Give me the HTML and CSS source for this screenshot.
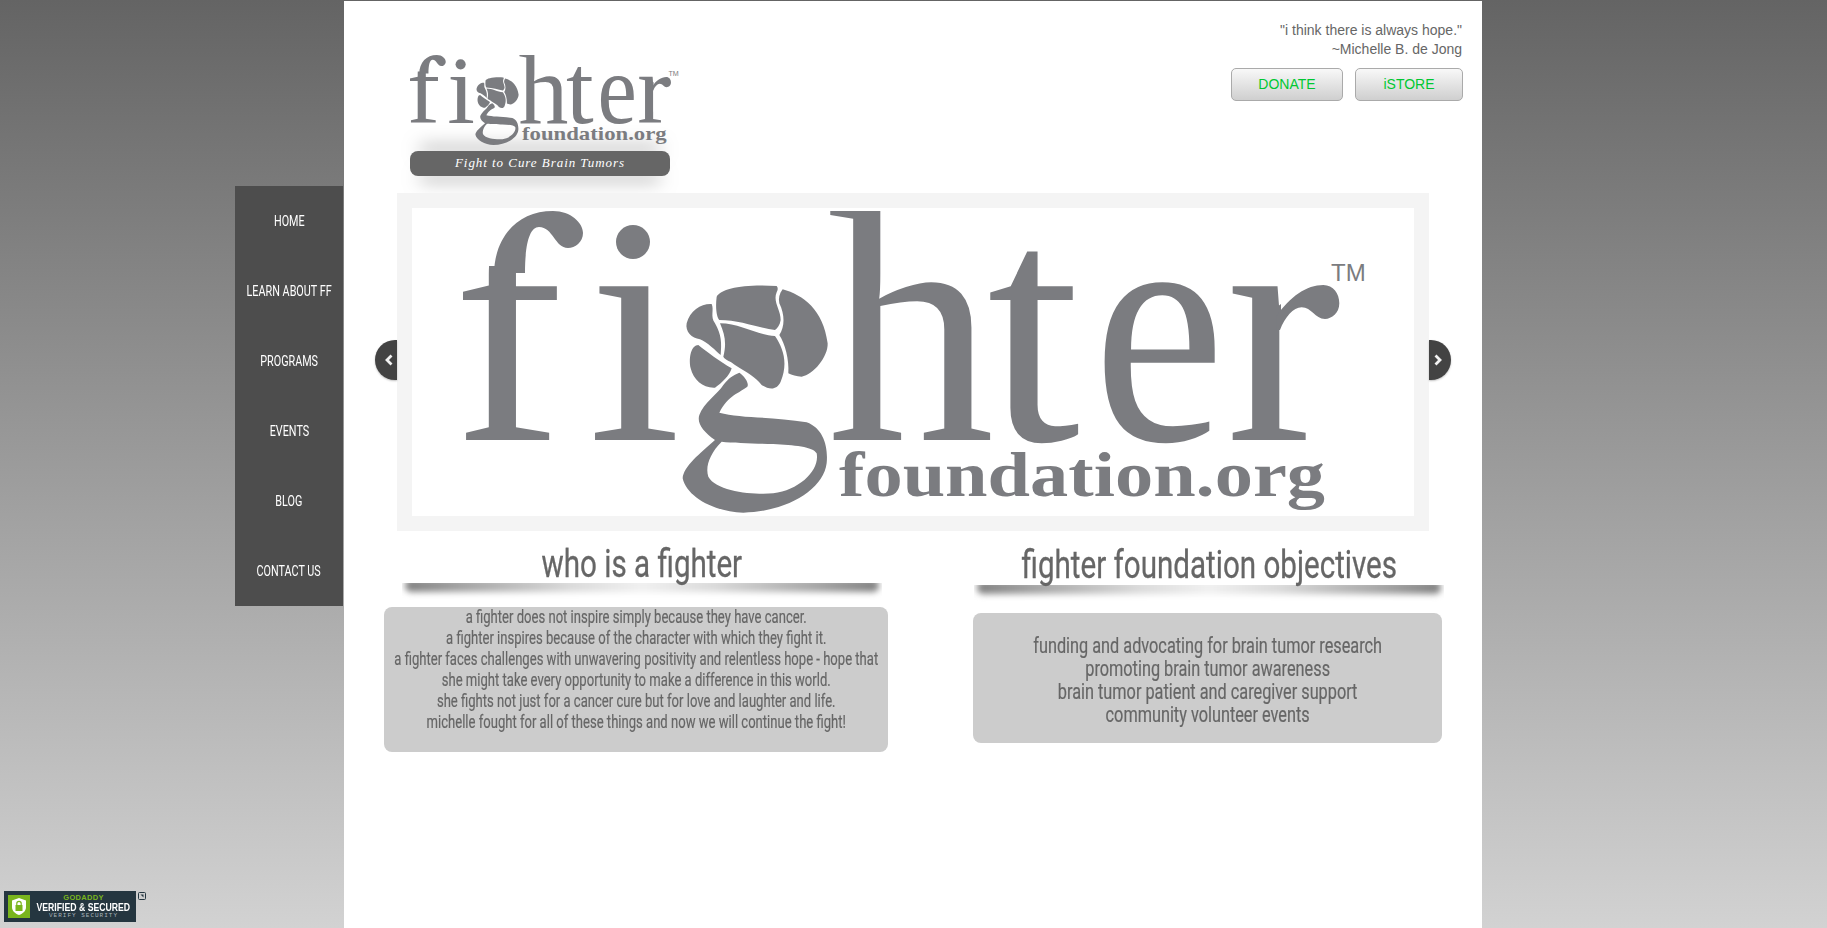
FILE: index.html
```html
<!DOCTYPE html>
<html lang="en">
<head>
<meta charset="utf-8">
<title>Fighter Foundation</title>
<link rel="stylesheet" href="styles.css">
</head>
<body>
<svg class="defs" width="0" height="0" aria-hidden="true">
  <defs>
    <clipPath id="clip-f"><rect x="-20" y="55" width="160" height="200"/></clipPath>
    <clipPath id="clip-r"><rect x="740" y="0" width="78" height="300"/><rect x="740" y="190" width="130" height="60"/></clipPath>
    <g id="fighter-logo">
      <text class="logo-word" x="-11" y="229" clip-path="url(#clip-f)">f</text>
      <path class="logo-fill" d="M31 62C32 25 55 0 90 0C108 0 120 12 120 22C120 31 112 37 105 37C92 37 90 16 76 16C66 16 62 35 62 62Z"/>
      <text class="logo-word" x="125" y="229">ı</text>
      <circle class="logo-fill" cx="170" cy="31" r="17"/>
      <text class="logo-word" x="364" y="229">h</text>
      <text class="logo-word" x="524" y="229">t</text>
      <text class="logo-word" x="630" y="229" textLength="132" lengthAdjust="spacingAndGlyphs">e</text>
      <text class="logo-word" x="763" y="229" clip-path="url(#clip-r)">r</text>
      <text class="logo-tm" x="868" y="70">TM</text>
      <text class="logo-org" x="376" y="285" textLength="486" lengthAdjust="spacingAndGlyphs">foundation.org</text>
      <path class="logo-fill" transform="translate(667 19) scale(.3333)" d="M440 258C480 200 530 165 580 165C610 165 628 190 628 220C628 250 605 267 585 267C555 267 545 232 515 232C490 232 465 262 450 300L440 300Z"/>
      <g transform="translate(197 49) scale(.3333)">
        <path class="logo-fill" d="M170 110C185 85 250 72 350 78C356 85 352 92 350 97C338 125 362 150 362 180C360 195 352 205 345 210C300 205 240 180 178 180C172 175 165 150 170 110Z"/>
        <path class="logo-fill" d="M368 88C430 105 490 150 503 250C505 290 460 345 425 350C410 350 395 345 385 340C388 300 375 250 358 225C375 200 375 165 358 130C355 115 358 100 368 88Z"/>
        <path class="logo-fill" d="M155 132C163 150 150 170 165 190C185 225 185 250 182 285C170 275 140 245 120 238C95 235 75 215 80 190C90 150 125 130 155 132Z"/>
        <path class="logo-fill" d="M180 190C240 190 290 225 345 228C370 265 385 310 362 365C350 390 330 390 305 375C285 350 265 340 225 315C215 305 195 300 190 290C200 250 195 225 180 190Z"/>
        <path class="logo-fill" d="M115 255C140 275 180 305 215 325C210 345 185 370 165 383C130 385 100 360 92 325C85 290 95 255 115 255Z"/>
        <path class="logo-fill" fill-rule="evenodd" d="M238 338C255 350 268 370 262 380C240 398 205 405 178 458C240 475 340 470 440 487C490 505 505 560 500 610C490 690 380 755 250 758C160 755 80 710 68 655C70 620 120 580 165 540C130 515 110 490 118 465C130 430 175 400 190 375C205 355 220 345 238 338ZM185 545C150 580 135 620 145 650C170 695 280 705 340 700C420 690 480 630 470 580C460 560 400 555 340 552C290 550 220 550 185 545Z"/>
      </g>
    </g>
  </defs>
</svg>

<div class="page">
  <nav class="side-nav">
    <a class="nav-item"><span class="squeeze">Home</span></a>
    <a class="nav-item"><span class="squeeze">Learn About FF</span></a>
    <a class="nav-item"><span class="squeeze">Programs</span></a>
    <a class="nav-item"><span class="squeeze">Events</span></a>
    <a class="nav-item"><span class="squeeze">Blog</span></a>
    <a class="nav-item"><span class="squeeze">Contact Us</span></a>
  </nav>

  <main class="column">
    <header class="top">
      <div class="brand">
        <svg class="logo-small" viewBox="0 0 910 305" role="img" aria-label="fighter foundation.org"><use href="#fighter-logo"/></svg>
        <div class="tagline">Fight to Cure Brain Tumors</div>
      </div>
      <div class="top-right">
        <p class="quote">"i think there is always hope."<br>~Michelle B. de Jong</p>
        <div class="buttons">
          <a class="btn btn-donate">DONATE</a>
          <a class="btn btn-store">iSTORE</a>
        </div>
      </div>
    </header>

    <section class="slider">
      <span class="arrow arrow-left"><svg viewBox="0 0 10 12" class="chev"><path d="M7.500 1.500 3 6l4.500 4.500"/></svg></span>
      <div class="slide">
        <svg class="logo-large" viewBox="0 0 910 305" role="img" aria-label="fighter foundation.org"><use href="#fighter-logo"/></svg>
      </div>
      <span class="arrow arrow-right"><svg viewBox="0 0 10 12" class="chev"><path d="M2.500 1.500 7 6l-4.500 4.500"/></svg></span>
    </section>

    <section class="info">
      <article class="info-col info-who">
        <h2 class="info-head"><span class="squeeze">who is a fighter</span></h2>
        <div class="shade"></div>
        <div class="panel panel-who">
          <div class="squeeze">
            a fighter does not inspire simply because they have cancer.<br>
            a fighter inspires because of the character with which they fight it.<br>
            a fighter faces challenges with unwavering positivity and relentless hope - hope that<br>
            she might take every opportunity to make a difference in this world.<br>
            she fights not just for a cancer cure but for love and laughter and life.<br>
            michelle fought for all of these things and now we will continue the fight!
          </div>
        </div>
      </article>
      <article class="info-col info-obj">
        <h2 class="info-head"><span class="squeeze">fighter foundation objectives</span></h2>
        <div class="shade"></div>
        <div class="panel panel-obj">
          <div class="squeeze">
            funding and advocating for brain tumor research<br>
            promoting brain tumor awareness<br>
            brain tumor patient and caregiver support<br>
            community volunteer events
          </div>
        </div>
      </article>
    </section>
  </main>
</div>

<div class="seal">
  <div class="seal-badge">
    <span class="seal-icon">
      <svg viewBox="0 0 22 23" width="22" height="23"><path d="M11 3 18 5.500V12c0 4-3 6.500-7 8-4-1.500-7-4-7-8V5.500Z" fill="#fff"/><rect x="7.500" y="10" width="7" height="6" fill="#7ab51d"/><path d="M8.800 10V8.500a2.200 2.200 0 0 1 4.400 0V10" fill="none" stroke="#7ab51d" stroke-width="1.200"/></svg>
    </span>
    <span class="seal-text">
      <span class="seal-brand">GODADDY</span>
      <span class="seal-main">VERIFIED &amp; SECURED</span>
      <span class="seal-sub">VERIFY SECURITY</span>
    </span>
  </div>
  <svg class="seal-mark" viewBox="0 0 8 8" width="8" height="8"><rect x=".5" y=".5" width="7" height="7" rx="1" fill="none" stroke="#253640"/><path d="M2.500 2.500h3v3z" fill="#253640"/></svg>
</div>
</body>
</html>
```

FILE: styles.css
```css
* { box-sizing: border-box; }
html, body { margin: 0; padding: 0; height: 100%; overflow: hidden; }
body {
  background: linear-gradient(#646464, #d2d2d2);
  font-family: "Liberation Sans", Arial, sans-serif;
  color: #666;
}
.defs { position: absolute; }

.squeeze { display: inline-block; white-space: nowrap; flex: none; font-family: Roboto, "Liberation Sans", sans-serif; }

.page { display: flex; align-items: flex-start; padding-left: 235px; height: 928px; }

.side-nav { width: 108px; margin-top: 186px; margin-right: 1px; background: #4d4d4d; display: flex; flex-direction: column; }
.nav-item {
  height: 70px; display: flex; align-items: center; justify-content: center;
  color: #fff; text-transform: uppercase; font-size: 15px;
}
.nav-item .squeeze { transform: scaleX(.72); }

.column { width: 1138px; height: 927px; margin-top: 1px; background: #fff; display: flex; flex-direction: column; }

.top { height: 192px; display: flex; justify-content: space-between; padding: 0 19px 0 66px; }
.brand { padding-top: 54px; width: 271px; }
.logo-small { display: block; width: 271px; height: 91px; position: relative; z-index: 1; }
.tagline {
  width: 260px; height: 25px; margin-top: 5px; padding-bottom: 2px; border-radius: 8px; background: #666; color: #fff;
  display: flex; align-items: center; justify-content: center;
  font-family: "Liberation Serif", serif; font-style: italic; font-size: 13px; letter-spacing: .95px;
  box-shadow: 0 14px 18px -10px rgba(0,0,0,.5), 0 -14px 18px -10px rgba(0,0,0,.5);
}
.top-right { padding-top: 20px; display: flex; flex-direction: column; align-items: flex-end; }
.quote { margin: 0; font-size: 14px; line-height: 19px; text-align: right; padding-right: 1px; }
.buttons { display: flex; gap: 12px; margin-top: 9px; }
.btn {
  height: 33px; padding-bottom: 2px; display: flex; align-items: center; justify-content: center;
  border: 1px solid #aaa; border-radius: 5px;
  background: linear-gradient(#f8f8f8, #cfcfcf);
  color: #00c832; font-size: 14px;
}
.btn-donate { width: 112px; }
.btn-store { width: 108px; }

.slider { position: relative; width: 1032px; height: 338px; margin-left: 53px; padding: 15px; background: #f4f4f4; }
.slide { height: 308px; background: #fff; padding: 3px 0 0 51px; }
.logo-large { display: block; width: 910px; height: 305px; }
.logo-word { font-family: "Liberation Serif", serif; font-size: 335px; fill: #7b7c80; }
.logo-fill { fill: #7b7c80; }
.logo-tm { font-family: "Liberation Sans", sans-serif; font-size: 24px; fill: #7b7c80; }
.logo-org { font-family: "Liberation Serif", serif; font-weight: 700; font-size: 64px; fill: #7b7c80; }

.arrow {
  position: absolute; top: 147px; width: 22px; height: 40px; background: #434343;
  display: flex; align-items: center; justify-content: center;
  box-shadow: 0 1px 2px rgba(0,0,0,.25);
}
.arrow-left { left: -22px; padding-left: 5px; border-radius: 20px 0 0 20px; }
.arrow-right { right: -22px; padding-right: 5px; border-radius: 0 20px 20px 0; }
.chev { width: 10px; height: 12px; flex: none; }
.chev path { fill: none; stroke: #f2f2f2; stroke-width: 2.800; }

.info { display: flex; gap: 85px; padding-left: 40px; }
.info-col { display: flex; flex-direction: column; }
.info-who { width: 504px; }
.info-obj { width: 469px; }
.info-head {
  margin: 0; display: flex; justify-content: center; font-weight: 400; color: #666; font-size: 38px;
  position: relative; z-index: 1;
}
.info-head .squeeze { transform: scaleX(.778); -webkit-text-stroke: .3px #666; }
.info-who .info-head { height: 52px; line-height: 66px; width: 480px; margin-left: 18px; }
.info-obj .info-head { height: 54px; line-height: 69px; width: 470px; margin-left: 1px; }

.shade { position: relative; overflow: hidden; }
.info-who .shade { height: 24px; width: 480px; margin-left: 18px; }
.info-obj .shade { height: 28px; width: 470px; margin-left: 1px; }
.shade::before {
  content: ""; position: absolute; left: 3px; right: 3px; top: -4px; height: 13px;
  background: linear-gradient(90deg, #808080, #a2a2a2 12%, #dadada 35%, #f0f0f0 50%, #dadada 65%, #a2a2a2 88%, #808080);
  filter: blur(3px);
  border-radius: 6px;
}

.panel {
  background: #ccc; border-radius: 8px; text-align: center; color: #666;
  display: flex; justify-content: center;
}
.panel-who { height: 145px; font-size: 18px; line-height: 21px; }
.panel-who .squeeze { transform: scaleX(.726); -webkit-text-stroke: .2px #666; margin-top: -1px; }
.panel-obj { height: 130px; font-size: 22px; line-height: 23px; padding-top: 21px; }
.panel-obj .squeeze { transform: scaleX(.74); -webkit-text-stroke: .2px #666; }

.seal { position: absolute; left: 4px; top: 891px; display: flex; align-items: flex-start; gap: 2px; }
.seal-badge { width: 132px; height: 31px; background: #253640; display: flex; padding: 4px; gap: 5px; }
.seal-icon { width: 22px; height: 23px; background: #7ab51d; display: block; }
.seal-text { display: flex; flex-direction: column; align-items: center; flex: 1; width: 97px; }
.seal-brand { font-size: 7.500px; line-height: 6px; font-weight: 700; color: #7ab51d; letter-spacing: .3px; }
.seal-main { font-size: 11px; line-height: 12px; font-weight: 700; color: #fff; white-space: nowrap; flex: none; transform: scaleX(.79); }
.seal-sub { font-family: "Liberation Mono", monospace; font-size: 6px; line-height: 6px; letter-spacing: 1px; color: #a9b4ba; white-space: nowrap; }
.seal-mark { margin-top: 1px; }
```
